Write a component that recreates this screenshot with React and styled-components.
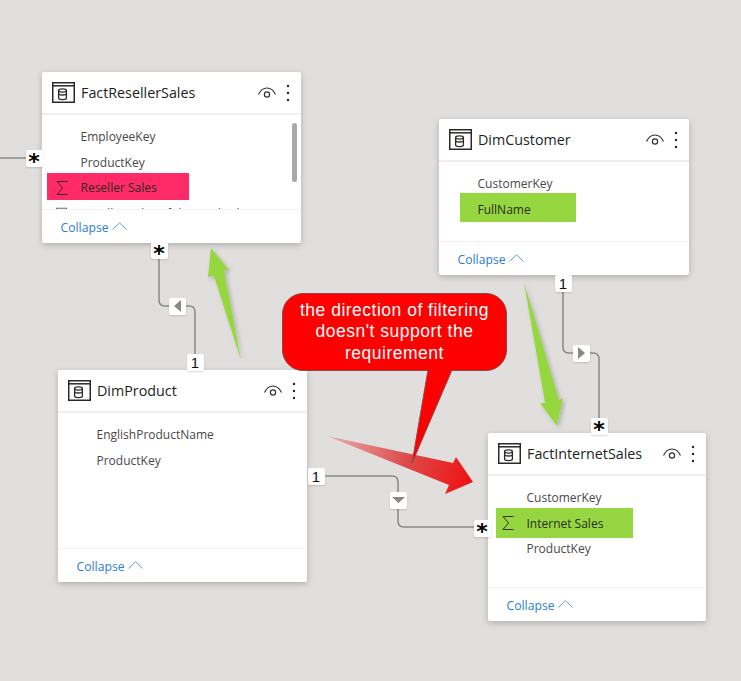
import React from "react";
import styled, { createGlobalStyle } from "styled-components";

const tables = [
  {
    name: "FactResellerSales",
    x: 42,
    y: 72,
    w: 259,
    h: 171,
    scroll: true,
    rows: [
      { label: "EmployeeKey" },
      { label: "ProductKey" },
      { label: "Reseller Sales", sigma: true, mark: "#ff2a68", from: 5, to: 147, top: -2, tall: 27 },
      { label: "Reseller Sales of the total sales", calc: true },
    ],
  },
  {
    name: "DimCustomer",
    x: 439,
    y: 119,
    w: 250,
    h: 156,
    rows: [
      { label: "CustomerKey" },
      { label: "FullName", mark: "#96d741", from: 21, to: 137, top: -4, tall: 29 },
    ],
  },
  {
    name: "DimProduct",
    x: 58,
    y: 370,
    w: 249,
    h: 212,
    rows: [{ label: "EnglishProductName" }, { label: "ProductKey" }],
  },
  {
    name: "FactInternetSales",
    x: 488,
    y: 433,
    w: 218,
    h: 188,
    rows: [
      { label: "CustomerKey" },
      { label: "Internet Sales", sigma: true, mark: "#96d741", from: 8, to: 145, top: -3, tall: 30 },
      { label: "ProductKey" },
    ],
  },
];

const badges = [
  { x: 34, y: 158, star: true },
  { x: 159, y: 250, star: true },
  { x: 599, y: 426, star: true },
  { x: 482, y: 528, star: true },
  { x: 195, y: 362, text: "1" },
  { x: 563, y: 283, text: "1" },
  { x: 316, y: 476, text: "1" },
  { x: 177, y: 306, arrow: "left" },
  { x: 581, y: 353, arrow: "right" },
  { x: 398, y: 500, arrow: "down" },
];

const arrowPoints = {
  left: "12,2 12,14 5,8",
  right: "5,2 5,14 12,8",
  down: "2,5 15,5 8.5,11",
};

const GlobalStyle = createGlobalStyle`
  html, body {
    margin: 0;
    padding: 0;
    background: #e1dfdd;
  }
`;

const Canvas = styled.div`
  position: relative;
  width: 741px;
  height: 681px;
  overflow: hidden;
  background: #e1dfdd;
  font-family: "Open Sans", "Noto Sans", sans-serif;
`;

const Layer = styled.svg`
  position: absolute;
  left: 0;
  top: 0;
  pointer-events: none;
`;

const Card = styled.div`
  position: absolute;
  left: ${(p) => p.$x}px;
  top: ${(p) => p.$y}px;
  width: ${(p) => p.$w}px;
  height: ${(p) => p.$h}px;
  display: flex;
  flex-direction: column;
  background: #fff;
  border-radius: 2px;
  box-shadow: 0 2px 6px rgba(0, 0, 0, 0.22);
`;

const Header = styled.div`
  height: 43px;
  flex: none;
  display: flex;
  align-items: center;
  padding: 0 10px;
  border-bottom: 2px solid #f0efee;
  box-sizing: border-box;
`;

const Title = styled.div`
  margin-left: 6px;
  flex: 1;
  font-size: 14.3px;
  font-weight: 400;
  color: #201f1e;
  white-space: nowrap;
`;

const Body = styled.div`
  flex: 1;
  min-height: 0;
  overflow: hidden;
  padding-top: 9px;
`;

const Row = styled.div`
  position: relative;
  height: 25.6px;
  display: flex;
  align-items: center;
  padding-left: 38.5px;
  font-size: 12px;
  color: ${(p) => (p.$marked ? "#2b2a20" : "#4a4847")};
  white-space: nowrap;
`;

const Mark = styled.div`
  position: absolute;
  left: ${(p) => p.$from}px;
  width: ${(p) => p.$to - p.$from}px;
  top: ${(p) => p.$top}px;
  height: ${(p) => p.$tall}px;
  background: ${(p) => p.$color};
`;

const RowIcon = styled.svg`
  position: absolute;
  left: 14px;
  top: 50%;
  transform: translateY(-50%);
`;

const RowLabel = styled.span`
  position: relative;
`;

const Footer = styled.div`
  height: 34px;
  flex: none;
  display: flex;
  align-items: center;
  gap: 3px;
  padding-left: 18.5px;
  padding-top: 2px;
  border-top: 1px solid #f3f2f1;
  box-sizing: border-box;
  font-size: 12.2px;
  color: #2b7cd3;
`;

const Scrollbar = styled.div`
  position: absolute;
  left: 250px;
  top: 51px;
  width: 5px;
  height: 59px;
  border-radius: 3px;
  background: #a8a8a8;
`;

const Badge = styled.div`
  position: absolute;
  left: ${(p) => p.$x - 8.5}px;
  top: ${(p) => p.$y - 8.5}px;
  width: 17px;
  height: 17px;
  display: flex;
  align-items: center;
  justify-content: center;
  background: #fff;
  border-radius: 2px;
  box-shadow: 0 1px 2px rgba(0, 0, 0, 0.15);
  color: #111;
  font-family: "Liberation Sans", sans-serif;
  font-size: 15px;
`;

const Star = styled.span`
  font-family: "DejaVu Sans", sans-serif;
  font-weight: 700;
  font-size: 22px;
  line-height: 16px;
  height: 16px;
  margin-top: 8px;
  color: #000;
`;

const Callout = styled.div`
  position: absolute;
  left: 282px;
  top: 293px;
  width: 225px;
  height: 78px;
  box-sizing: border-box;
  display: flex;
  align-items: center;
  justify-content: center;
  text-align: center;
  background: #ff0000;
  border: 1px solid #8a4a4a;
  border-radius: 21px;
  color: #fff;
  font-family: "Liberation Sans", sans-serif;
  font-size: 17.5px;
  letter-spacing: 0.5px;
  line-height: 21.5px;
`;

const CalloutText = styled.div`
  white-space: nowrap;
`;

function TableIcon() {
  return (
    <svg width="23" height="21" viewBox="0 0 23 21" fill="none" stroke="#2b2a29" strokeWidth="1.5" style={{ flex: "none" }}>
      <rect x="0.75" y="0.75" width="21.5" height="19.5" />
      <path d="M0.7 3.8H22.3" />
      <path d="M6.6 8.5v7.6c0 1 1.7 1.6 3.9 1.6s3.9-.6 3.9-1.6V8.5" strokeWidth="1.3" />
      <ellipse cx="10.5" cy="8.5" rx="3.9" ry="1.6" strokeWidth="1.3" />
      <path d="M6.6 11.4c0 1 1.7 1.6 3.9 1.6s3.9-.6 3.9-1.6" strokeWidth="1.3" />
    </svg>
  );
}

function EyeIcon() {
  return (
    <svg width="18" height="12" viewBox="0 0 18 12" fill="none" stroke="#33312f" strokeWidth="1.2" style={{ flex: "none" }}>
      <path d="M0.5 7.5C2.5 3 5.5 1 9 1s6.5 2 8.5 6.5" />
      <circle cx="9" cy="7.5" r="2.6" />
    </svg>
  );
}

function KebabIcon() {
  return (
    <svg width="4" height="18" viewBox="0 0 4 18" fill="#252423" style={{ flex: "none", marginLeft: 10, marginRight: 1 }}>
      <circle cx="2" cy="2" r="1.2" />
      <circle cx="2" cy="9" r="1.2" />
      <circle cx="2" cy="16" r="1.2" />
    </svg>
  );
}

function ChevronUp() {
  return (
    <svg width="15" height="8" viewBox="0 0 15 8" fill="none" stroke="#5b9bd8" strokeWidth="1" style={{ marginBottom: 4 }}>
      <path d="M0.5 7.5L7.5 0.8L14.5 7.5" />
    </svg>
  );
}

function SigmaIcon() {
  return (
    <RowIcon width="12" height="15" viewBox="0 0 12 15" fill="none" stroke="#3a2a20" strokeWidth="1">
      <path d="M11.5 1H1L6.5 7.5L1 14H11.5" />
    </RowIcon>
  );
}

function CalcIcon() {
  return (
    <RowIcon width="11" height="13" viewBox="0 0 11 13" fill="none" stroke="#6b6460" strokeWidth="1.2">
      <rect x="0.6" y="0.6" width="9.8" height="11.8" />
      <path d="M2.5 3.5H8.5" />
    </RowIcon>
  );
}

function TableCard({ table }) {
  return (
    <Card $x={table.x} $y={table.y} $w={table.w} $h={table.h}>
      <Header>
        <TableIcon />
        <Title>{table.name}</Title>
        <EyeIcon />
        <KebabIcon />
      </Header>
      <Body>
        {table.rows.map((row) => (
          <Row key={row.label} $marked={!!row.mark}>
            {row.mark && <Mark $color={row.mark} $from={row.from} $to={row.to} $top={row.top} $tall={row.tall} />}
            {row.sigma && <SigmaIcon />}
            {row.calc && <CalcIcon />}
            <RowLabel>{row.label}</RowLabel>
          </Row>
        ))}
      </Body>
      {table.scroll && <Scrollbar />}
      <Footer>
        Collapse
        <ChevronUp />
      </Footer>
    </Card>
  );
}

export default function App() {
  return (
    <Canvas>
      <GlobalStyle />
      <Layer width="741" height="681" fill="none" stroke="#8a8886" strokeWidth="1.5">
        <path d="M0 158H30" />
        <path d="M159 250V300Q159 306 165 306H189Q195 306 195 312V362" />
        <path d="M563 283V347Q563 353 569 353H593Q599 353 599 359V426" />
        <path d="M316 476H392Q398 476 398 482V521Q398 527 404 527H482" />
      </Layer>

      {tables.map((table) => (
        <TableCard key={table.name} table={table} />
      ))}

      {badges.map((badge) => (
        <Badge key={`${badge.x}-${badge.y}`} $x={badge.x} $y={badge.y}>
          {badge.star && <Star>*</Star>}
          {badge.text}
          {badge.arrow && (
            <svg width="17" height="17" viewBox="0 0 17 17" fill="#8a8886">
              <polygon points={arrowPoints[badge.arrow]} />
            </svg>
          )}
        </Badge>
      ))}

      <Layer width="741" height="681">
        <defs>
          <linearGradient id="redArrow" gradientUnits="userSpaceOnUse" x1="327" y1="436" x2="473" y2="482">
            <stop offset="0" stopColor="#e8b0b0" />
            <stop offset="0.55" stopColor="#dd4a4a" />
            <stop offset="1" stopColor="#f01010" />
          </linearGradient>
          <filter id="soft" x="-30%" y="-30%" width="160%" height="160%">
            <feDropShadow dx="2" dy="2" stdDeviation="2" floodColor="#000" floodOpacity="0.22" />
          </filter>
        </defs>
        <polygon filter="url(#soft)" fill="#96d741" points="211,248 229,270 224,270 241,360 214,276 208,277" />
        <polygon filter="url(#soft)" fill="#96d741" points="524,282 559,400 563,398 557,426 540,403 545,403" />
        <polygon fill="url(#redArrow)" points="327,436 453,463 456,457 473,482 445,494 449,485" />
        <polygon fill="#ff0000" stroke="#8a4a4a" strokeWidth="1" points="428,370 412,463 452,370" />
      </Layer>

      <Callout>
        <CalloutText>
          the direction of filtering
          <br />
          doesn't support the
          <br />
          requirement
        </CalloutText>
      </Callout>
      <Layer width="741" height="681">
        <polygon fill="#ff0000" points="429,368 414,458 451,368" />
      </Layer>
    </Canvas>
  );
}
